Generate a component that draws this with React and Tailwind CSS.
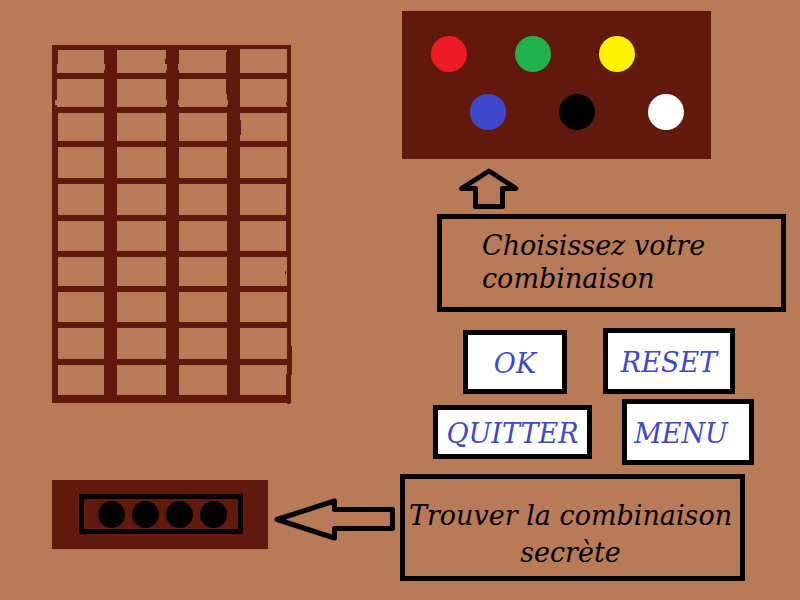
const CHOICES = [
  [
    { name: "Rouge", color: "bg-[#ed1c24]" },
    { name: "Vert", color: "bg-[#22b14c]" },
    { name: "Jaune", color: "bg-[#fff200]" },
  ],
  [
    { name: "Bleu", color: "bg-[#3f48cc]" },
    { name: "Noir", color: "bg-black" },
    { name: "Blanc", color: "bg-white" },
  ],
];

const CELLS = Array.from({ length: 40 }, (_, i) => i);
const PEGS = [0, 1, 2, 3];

function Board() {
  return (
    <section
      aria-label="Plateau"
      className="relative w-[239px] bg-[#61180d] pt-[5px] pr-1 pb-2 pl-1.5"
    >
      <div className="grid grid-cols-[46fr_49fr_48fr_47fr] grid-rows-[23px_28px_28px_31px_31px_30px_29px_30px_31px_30px] gap-x-[13px] gap-y-1.5">
        {CELLS.map((i) => (
          <div key={i} className="bg-[#b97a57]" />
        ))}
      </div>
      {/* brush irregularities along the hand-drawn lines */}
      <svg
        className="absolute top-0 left-0"
        width="242"
        height="360"
        viewBox="0 0 242 360"
        shapeRendering="crispEdges"
        aria-hidden="true"
      >
        <path
          fill="#b97a57"
          d="M5 19h1v9h-1zM52 19h1v6h-1zM5 34h1v28h-1zM3 55h3v5h-3zM114 19h1v6h-1zM126 19h1v6h-1zM114 55h1v5h-1zM126 55h1v5h-1zM175 55h1v5h-1zM188 4h47v1h-47z"
        />
        <path
          fill="#61180d"
          d="M113 14h1v5h-1zM113 28h1v1h-1zM174 7h1v42h-1zM233 28h2v1h-2zM234 57h1v3h-1zM188 75h1v15h-1zM234 139h1v73h-1zM233 226h1v3h-1zM239 301h1v29h-1zM234 329h1v22h-1zM235 358h3v1h-3z"
        />
      </svg>
    </section>
  );
}

function Palette() {
  return (
    <section
      aria-label="Couleurs"
      className="ml-0.5 flex h-[148px] w-[309px] flex-col gap-[22px] bg-[#61180d] pt-[25px]"
    >
      <div className="flex gap-12 pl-[29px]">
        {CHOICES[0].map((c) => (
          <button key={c.name} aria-label={c.name} className={`size-9 rounded-full ${c.color}`} />
        ))}
      </div>
      <div className="flex gap-[53px] pl-[68px]">
        {CHOICES[1].map((c) => (
          <button key={c.name} aria-label={c.name} className={`size-9 rounded-full ${c.color}`} />
        ))}
      </div>
    </section>
  );
}

function ActionButton({ className, children }) {
  return (
    <button
      className={`flex items-center justify-center border-5 border-black bg-white pt-0.5 text-[#3f48cc] ${className}`}
    >
      {children}
    </button>
  );
}

export default function App() {
  return (
    <main className="grid min-h-screen grid-cols-2 bg-[#b97a57] font-['DejaVu_Serif',serif] text-[27px] leading-[33px] text-black italic">
      <div className="pt-[45px] pl-[52px]">
        <Board />
        <div className="mt-[77px] flex items-start">
          <section
            aria-label="Combinaison secrète"
            className="h-[69px] w-[216px] shrink-0 bg-[#61180d] pt-3.5 pl-[27px]"
          >
            <div className="flex h-10 w-[164px] gap-[7px] border-5 border-black pt-0.5 pl-3.5">
              {PEGS.map((i) => (
                <span key={i} className="size-[27px] rounded-full bg-black" />
              ))}
            </div>
          </section>
          <svg
            className="mt-[17px] ml-1 shrink-0"
            width="124"
            height="45"
            viewBox="0 0 124 45"
            fill="none"
            stroke="#000"
            strokeWidth="5"
            strokeLinejoin="round"
            aria-hidden="true"
          >
            <path d="M5 22.500L62.500 4V12.500H120.500V31.500H62.500V41z" />
          </svg>
        </div>
      </div>

      <div className="pt-[11px]">
        <Palette />
        <svg
          className="mt-2 ml-[58px]"
          width="62"
          height="43"
          viewBox="0 0 62 43"
          fill="none"
          stroke="#000"
          strokeWidth="5"
          strokeLinejoin="round"
          aria-hidden="true"
        >
          <path d="M31 4L58 21.500H44.500V39.500H17.500V21.500H3.500z" />
        </svg>
        <p className="mt-1 ml-[37px] h-[98px] w-[349px] border-5 border-black pt-[10px] pl-10">
          Choisissez votre
          <br />
          combinaison
        </p>
        <div className="mt-4 ml-[63px] flex items-end gap-9">
          <ActionButton className="h-16 w-[104px]">OK</ActionButton>
          <ActionButton className="h-[66px] w-[132px]">RESET</ActionButton>
        </div>
        <div className="mt-[5px] ml-[33px] flex items-center gap-[30px]">
          <ActionButton className="h-[54px] w-[159px]">QUITTER</ActionButton>
          <ActionButton className="h-[66px] w-[132px] pr-3.5">MENU</ActionButton>
        </div>
        <p className="mt-[9px] h-[107px] w-[345px] border-5 border-black pt-[18px] pr-1 text-center leading-[37px]">
          Trouver la combinaison
          <br />
          secrète
        </p>
      </div>
    </main>
  );
}
